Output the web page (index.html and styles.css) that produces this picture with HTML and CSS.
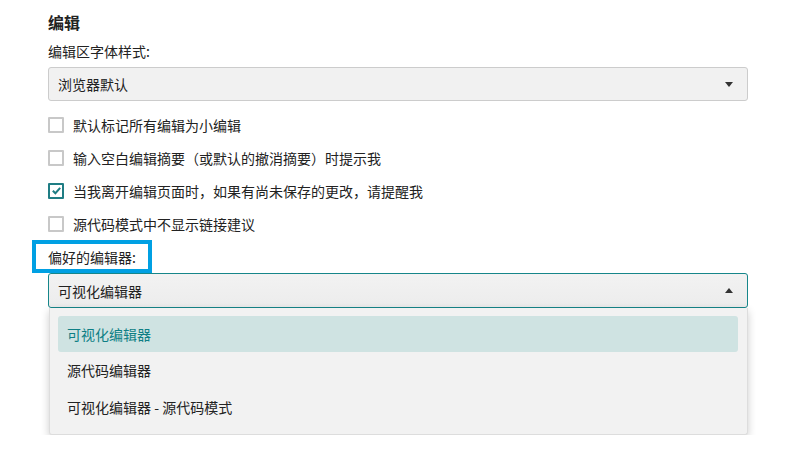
FILE: index.html
```html
<!DOCTYPE html>
<html lang="zh-CN">
<head>
    <meta charset="UTF-8">
    <meta name="viewport" content="width=device-width, initial-scale=1.0">
    <title>编辑 - 参数设置</title>
    <link rel="stylesheet" href="styles.css">
</head>
<body>
    <div class="container">
        <h2>编辑</h2>
        <div class="field-label">编辑区字体样式:</div>
        <div class="select">
            <span>浏览器默认</span>
            <span class="arrow down"></span>
        </div>

        <ul class="checks">
            <li><span class="box"></span>默认标记所有编辑为小编辑</li>
            <li><span class="box"></span>输入空白编辑摘要（或默认的撤消摘要）时提示我</li>
            <li><span class="box checked"><svg viewBox="0 0 12 12" width="11" height="11"><path d="M2 6.2 L4.8 9 L10 3.2" fill="none" stroke="#1f7d84" stroke-width="2.2"/></svg></span>当我离开编辑页面时，如果有尚未保存的更改，请提醒我</li>
            <li><span class="box"></span>源代码模式中不显示链接建议</li>
        </ul>

        <div class="highlight"><span class="field-label">偏好的编辑器:</span></div>
        <div class="select open">
            <span>可视化编辑器</span>
            <span class="arrow up"></span>
        </div>
        <div class="options">
            <div class="option selected">可视化编辑器</div>
            <div class="option">源代码编辑器</div>
            <div class="option">可视化编辑器 - 源代码模式</div>
        </div>
    </div>
</body>
</html>
```

FILE: styles.css
```css
body {
    margin: 0;
    background-color: #fff;
    font-family: "Noto Sans CJK SC", "Noto Sans", sans-serif;
    font-size: 14px;
    color: #222;
}
.container {
    width: 700px;
    padding: 10px 0 0 48px;
}
h2 {
    margin: 0;
    font-size: 16px;
    font-weight: bold;
    line-height: 24px;
}
.field-label {
    display: block;
    margin-top: 6px;
    line-height: 22px;
}
.select {
    box-sizing: border-box;
    height: 34px;
    margin-top: 5px;
    padding: 0 14px 0 9px;
    display: flex;
    align-items: center;
    justify-content: space-between;
    background-color: #f1f1f1;
    border: 1px solid #ccc;
    border-radius: 3px;
}
.arrow {
    width: 0;
    height: 0;
    border-left: 4.5px solid transparent;
    border-right: 4.5px solid transparent;
}
.arrow.down {
    border-top: 5px solid #333;
}
.arrow.up {
    border-bottom: 5px solid #333;
}
.checks {
    list-style: none;
    margin: 7px 0 0;
    padding: 0;
}
.checks li {
    display: flex;
    align-items: center;
    height: 33px;
}
.box {
    box-sizing: border-box;
    width: 16px;
    height: 16px;
    margin-right: 9px;
    border: 2px solid #c8c8c8;
    border-radius: 1px;
    display: flex;
    align-items: center;
    justify-content: center;
}
.box.checked {
    border-color: #1f7d84;
}
.highlight {
    box-sizing: border-box;
    width: 120px;
    height: 33px;
    margin: 0 0 0 -16px;
    padding: 0 0 0 12px;
    border: 4px solid #00a0e3;
    display: flex;
    align-items: center;
}
.highlight .field-label {
    margin: 0;
}
.select.open {
    margin-top: 0;
    height: 35px;
    border-color: #16868a;
    background: linear-gradient(#f2f2f2, #ececec);
}
.options {
    margin-left: 1px;
    padding: 8px 9px 8px 8px;
    background-color: #f2f2f2;
    border: 1px solid #ddd;
    border-top: none;
    border-radius: 0 0 3px 3px;
    box-shadow: 0 3px 8px rgba(0, 0, 0, 0.2);
}
.option {
    height: 37px;
    line-height: 37px;
    padding-left: 9px;
    border-radius: 3px;
}
.option.selected {
    height: 36px;
    line-height: 36px;
    background-color: #cfe3e2;
    color: #0e7f85;
}
```
